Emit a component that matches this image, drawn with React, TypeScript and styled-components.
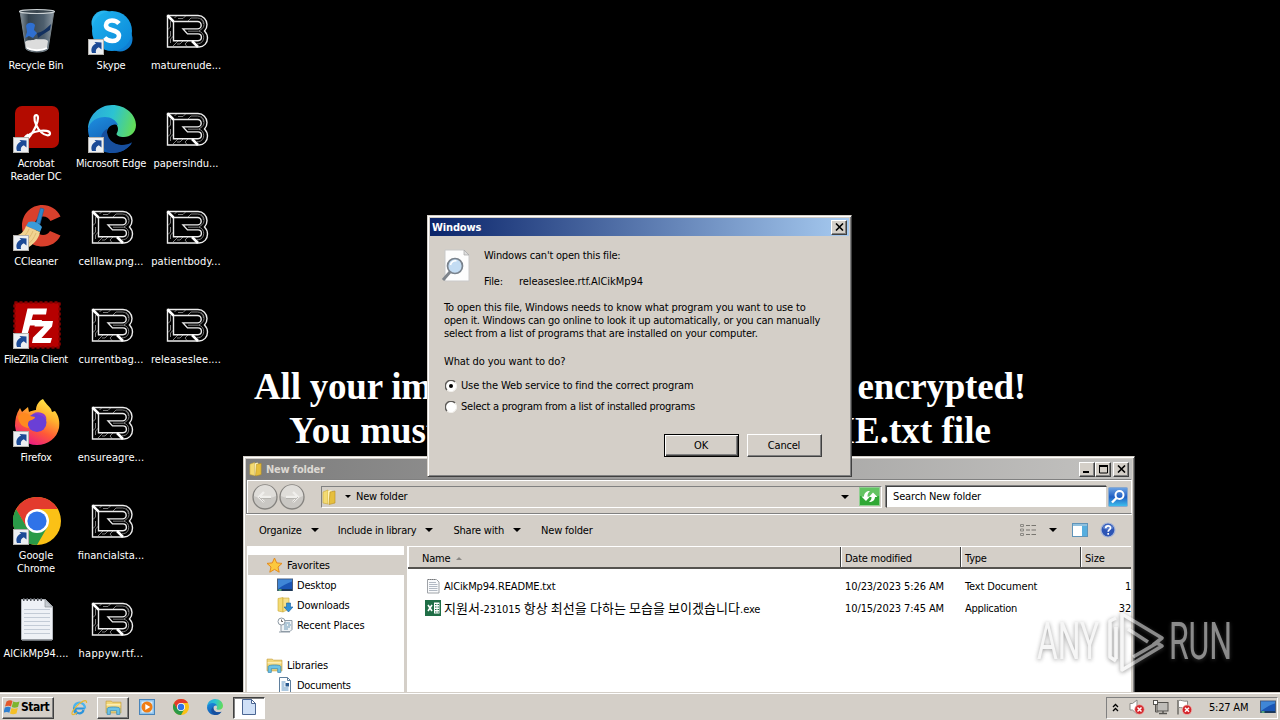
import React from 'react';
import styled, { createGlobalStyle, css } from 'styled-components';

const face = '#d4cfc8';
const uiFont = "'DejaVu Sans Condensed', 'DejaVu Sans', 'Noto Sans CJK KR', sans-serif";

const GlobalStyle = createGlobalStyle`
  *, *::before, *::after { box-sizing: border-box; }
  html, body { margin: 0; padding: 0; background: #000; overflow: hidden; }
  svg { display: block; flex: none; }
`;

const raised = css`
  border: 1px solid;
  border-color: #fff #404040 #404040 #fff;
  box-shadow: inset -1px -1px #808080;
  background: ${face};
`;
const sunken = css`
  border: 1px solid;
  border-color: #808080 #fff #fff #808080;
`;

const Screen = styled.div`
  position: relative;
  display: flex;
  flex-direction: column;
  width: 1280px;
  height: 720px;
  background: #000;
  overflow: hidden;
  font: 11px/13px ${uiFont};
  letter-spacing: -0.2px;
  color: #000;
`;
const Desktop = styled.main`
  position: relative;
  flex: 1;
  min-height: 0;
  overflow: hidden;
`;
const Text = styled.span<{ $track?: number; $bold?: boolean }>`
  white-space: nowrap;
  ${p => p.$track !== undefined && `letter-spacing: ${p.$track}px;`}
  ${p => p.$bold && 'font-weight: bold;'}
`;
const Hangul = styled.span`
  font-family: 'Noto Sans CJK KR', sans-serif;
  font-size: 13px;
  letter-spacing: 0.05px;
`;

/* wallpaper */
const Wallpaper = styled.div`
  position: absolute;
  left: 0;
  right: 0;
  top: 365px;
  display: flex;
  flex-direction: column;
  align-items: center;
  font: bold 37px/44px 'Liberation Serif', serif;
  color: #fff;
  letter-spacing: 0;
`;

/* desktop shortcuts */
const ShortcutColumns = styled.div`
  position: absolute;
  inset: 0 auto auto 0;
  display: flex;
`;
const ShortcutColumn = styled.div`
  display: flex;
  flex-direction: column;
  width: 75px;
  padding-top: 7px;
`;
const Cell = styled.div`
  height: 98px;
  width: 75px;
`;
const IconBox = styled.div`
  position: relative;
  width: 48px;
  height: 48px;
  margin-left: 13px;
  display: flex;
  align-items: center;
  justify-content: center;
`;
const Badge = styled.div`
  position: absolute;
  left: 0;
  bottom: 0;
`;
const CellLabel = styled.div<{ $track?: number }>`
  margin: 4px 3px 0 0;
  text-align: center;
  color: #fff;
  white-space: pre;
  letter-spacing: ${p => p.$track ?? -0.2}px;
`;

/* windows */
const ExplorerWindow = styled.section`
  position: absolute;
  left: 243px;
  top: 456px;
  width: 892px;
  height: 236px;
  padding: 2px 2px 0 2px;
  display: flex;
  flex-direction: column;
  background: ${face};
  border: 1px solid;
  border-color: ${face} #404040 transparent ${face};
  border-bottom: 0;
  box-shadow: inset 1px 1px #fff, inset -1px 0 #808080;
`;
const DialogWindow = styled.section`
  position: absolute;
  left: 427px;
  top: 215px;
  width: 425px;
  height: 262px;
  padding: 2px;
  display: flex;
  flex-direction: column;
  background: ${face};
  border: 1px solid;
  border-color: ${face} #404040 #404040 ${face};
  box-shadow: inset 1px 1px #fff, inset -1px -1px #808080;
`;
const TitleBar = styled.header<{ $active?: boolean }>`
  display: flex;
  align-items: center;
  height: ${p => (p.$active ? 18 : 20)}px;
  padding: 0 ${p => (p.$active ? 2 : 3)}px 0 ${p => (p.$active ? 2 : 3)}px;
  background: ${p =>
    p.$active ? 'linear-gradient(90deg, #0a246a, #a6caf0)' : 'linear-gradient(90deg, #7d7d7d, #c3c2c0)'};
  color: ${p => (p.$active ? '#fff' : '#dcd8d2')};
  gap: 3px;
`;
const Spacer = styled.div`
  flex: 1;
`;
const CaptionButton = styled.button<{ $gap?: boolean }>`
  ${raised}
  width: 16px;
  height: 15px;
  padding: 0;
  margin-left: ${p => (p.$gap ? 2 : 0)}px;
  display: flex;
  align-items: center;
  justify-content: center;
`;
const CaptionButtons = styled.div`
  display: flex;
`;

/* dialog */
const DialogBody = styled.div`
  flex: 1;
  display: flex;
  flex-direction: column;
  padding: 13px 27px 17px 14px;
`;
const DialogTop = styled.div`
  display: flex;
  gap: 13px;
  height: 39px;
  margin-left: -3px;
`;
const DialogFile = styled.div`
  display: flex;
  flex-direction: column;
  gap: 13px;
`;
const FileLine = styled.div`
  display: flex;
`;
const FileKey = styled.span`
  width: 35px;
`;
const Paragraph = styled.div`
  display: flex;
  flex-direction: column;
  margin-top: 13px;
`;
const Question = styled.div`
  margin: 15px 0 11px;
  letter-spacing: -0.12px;
`;
const RadioRow = styled.label`
  display: flex;
  align-items: center;
  gap: 4px;
  height: 13px;
  margin: 0 0 8px 1px;
`;
const DialogActions = styled.div`
  display: flex;
  justify-content: flex-end;
  gap: 8px;
  margin-top: 13px;
`;
const PushButton = styled.button<{ $primary?: boolean }>`
  ${raised}
  width: 75px;
  height: 23px;
  padding: 0 1px 1px 0;
  font: inherit;
  letter-spacing: inherit;
  color: #000;
  ${p => p.$primary && 'border-color: #000; box-shadow: inset 1px 1px #fff, inset -1px -1px #404040, inset -2px -2px #808080;'}
`;

/* explorer */
const AddressRow = styled.div`
  display: flex;
  align-items: center;
  height: 35px;
  padding: 0 1px 0 5px;
  border: 1px solid;
  border-color: #808080 #fff #808080 #808080;
  box-shadow: inset 1px 1px #fff, 0 1px #fff;
`;
const NavButtons = styled.div`
  display: flex;
  gap: 1px;
`;
const AddressBox = styled.div`
  ${sunken}
  display: flex;
  align-items: center;
  width: 561px;
  height: 22px;
  margin-left: 16px;
  padding: 0 32px 0 0;
`;
const Crumb = styled.div`
  display: flex;
  align-items: center;
  gap: 5px;
  margin-left: 8px;
`;
const RefreshSlot = styled.div`
  margin: 0 -31px 0 10px;
`;
const SearchBox = styled.div`
  display: flex;
  align-items: center;
  width: 221px;
  height: 22px;
  margin: 0 1px 0 4px;
  padding-left: 6px;
  background: #fff;
  border: 1px solid;
  border-color: #404040 ${face} ${face} #404040;
  box-shadow: -1px -1px #808080;
`;
const CommandBar = styled.div`
  display: flex;
  align-items: center;
  height: 32px;
  padding: 0 16px 0 13px;
`;
const Command = styled.div<{ $gap: number; $inner?: number }>`
  display: flex;
  align-items: center;
  gap: ${p => p.$inner ?? 8}px;
  margin-right: ${p => p.$gap}px;
`;
const Content = styled.div`
  display: flex;
  flex: 1;
  min-height: 0;
  margin: 0 1px;
  overflow: hidden;
`;
const NavPane = styled.nav`
  width: 157px;
  height: 146px;
  padding-top: 9px;
  background: #fff;
  overflow: hidden;
`;
const NavRow = styled.div<{ $child?: boolean; $selected?: boolean }>`
  display: flex;
  align-items: center;
  gap: 4px;
  height: 20px;
  margin-left: 1px;
  padding-left: ${p => (p.$child ? 29 : 18)}px;
  background: ${p => (p.$selected ? face : 'transparent')};
`;
const Splitter = styled.div`
  width: 3px;
  background: ${face};
`;
const FilePane = styled.div`
  flex: 1;
  background: #fff;
  border-left: 1px solid #fff;
  overflow: hidden;
`;
const FileGrid = styled.div<{ $header?: boolean }>`
  display: grid;
  grid-template-columns: ${p => (p.$header ? 433 : 432)}px 120px 120px 51px;
  height: ${p => (p.$header ? 23 : 22)}px;
  ${p => p.$header && `background: ${face}; border-bottom: 2px solid #55534f; border-top: 1px solid #fff; margin-bottom: 6px;`}
`;
const HeaderCell = styled.div`
  display: flex;
  align-items: center;
  gap: 6px;
  padding: 2px 0 0 3px;
  border-right: 1px solid #404040;
  border-left: 1px solid #fff;
  &:first-child { padding-left: 13px; }
  &:last-child { border-right: 0; }
`;
const FileCell = styled.div<{ $right?: boolean }>`
  display: flex;
  align-items: center;
  gap: 3px;
  padding-left: 5px;
  justify-content: ${p => (p.$right ? 'flex-end' : 'flex-start')};
  &:first-child { padding-left: 17px; }
`;

/* taskbar */
const Taskbar = styled.footer`
  display: flex;
  align-items: center;
  height: 28px;
  padding: 2px 2px 0;
  background: ${face};
  border-top: 1px solid ${face};
  box-shadow: inset 0 1px #fff;
`;
const StartButton = styled.button`
  ${raised}
  display: flex;
  align-items: center;
  gap: 1px;
  width: 52px;
  height: 22px;
  padding: 0 0 1px 1px;
  margin-right: 9px;
  font: bold 12px/14px ${uiFont};
  letter-spacing: -0.5px;
`;
const TaskSlot = styled.div<{ $state?: 'raised' | 'pressed' }>`
  display: flex;
  align-items: center;
  justify-content: center;
  width: 32px;
  height: 22px;
  padding-bottom: 1px;
  margin-right: 2px;
  ${p => p.$state === 'raised' && raised}
  ${p => p.$state === 'pressed' && 'background: #fff; border: 1px solid; border-color: #404040 #fff #fff #404040; box-shadow: inset 1px 1px #808080;'}
`;
const Tray = styled.div`
  ${sunken}
  display: flex;
  align-items: center;
  width: 172px;
  height: 22px;
  padding: 0 1px 1px 5px;
`;
const TrayIcon = styled.div<{ $gap: number }>`
  margin-right: ${p => p.$gap}px;
`;
const Watermark = styled.div`
  position: absolute;
  left: 1030px;
  top: 605px;
`;

const Svg = ({ w, h = w, box, children }: { w: number; h?: number; box?: string; children: React.ReactNode }) => (
  <svg width={w} height={h} viewBox={box ?? `0 0 ${w} ${h}`} fill="none">
    {children}
  </svg>
);

const LockIcon = () => (
  <Svg w={43} h={34}>
    <g stroke="#8a8a8a" strokeWidth=".9">
      <path d="M11 1.500L8.500 4M20 1.500L17 4.500h-5M22 7l3-3h6.500a6 6 0 0 1 6 6M4.500 7v6L2 15.500M4.500 17v5L2 24.500M7.500 22L4.500 25v4M12 27l-5 5M17 27l-3 3h-3M22 27l-3 3 2 2.500" />
      <path d="M22 17.200h10.500a6 6 0 0 1 5.200 6.500 6 6 0 0 1-5.200 6H31M35 4.500c2 1.500 3 3 3 6 0 2.500-1.500 4-3 5l-2 1.500" />
    </g>
    <path d="M1.500 1.500H32a9 9 0 0 1 9 9c0 3-1 5-2.500 6.500C40 18.500 41.500 21 41.500 24c0 5-3.500 9-8.500 9H1.500z" stroke="#ececec" strokeWidth="1.400" />
    <path d="M7.500 7.500H31.500a3.700 3.700 0 0 1 0 7.400H17l4.500 5H32a3.300 3.300 0 0 1 0 6.800H7.500z" stroke="#ececec" strokeWidth="1.400" />
    <path d="M1.500 1.500l6 6M26 27l6 6" stroke="#fff" strokeWidth="2.600" />
  </Svg>
);

const ShortcutArrow = () => (
  <Svg w={16}>
    <rect x=".5" y=".5" width="15" height="15" fill="#eceff2" stroke="#b4b2ae" />
    <path d="M13.500 10.500V3.500L6.500 3l1.500 1.700C4 6 2.500 10 4 14h4C7.300 11.500 8.300 9.500 10.800 8.300z" fill="#1b4a96" />
  </Svg>
);

const RecycleIcon = () => (
  <Svg w={48}>
    <defs>
      <linearGradient id="bin" x1="0" x2="1">
        <stop offset="0" stopColor="#8a97a0" /><stop offset=".25" stopColor="#33424e" />
        <stop offset=".7" stopColor="#4e5f6e" /><stop offset="1" stopColor="#8f9ba4" />
      </linearGradient>
    </defs>
    <path d="M7 4h34l-6 38c-3 4-18 4-22 0z" fill="url(#bin)" stroke="#78838a" />
    <path d="M13 19c1-4 7-4 9-1l-1 5 3 3-4 5-4-2-4 2 2-6z" fill="#2f6fd0" />
    <path d="M24 26c5-1 9-4 13-8l1-1-1 6-8 5-4 3z" fill="#12305f" />
    <path d="M12 35c3-3 8-1 11-3 4 1 9-1 12 2l-1 7c-4 3-16 3-21 0z" fill="#dcdcdc" />
    <path d="M14 41c5 3 15 3 20 0" stroke="#fff" strokeWidth="2" />
    <ellipse cx="24" cy="4.500" rx="17.500" ry="2" fill="#3a464f" stroke="#cdd3d6" strokeWidth="1.200" />
  </Svg>
);

const SkypeIcon = () => (
  <Svg w={48}>
    <defs>
      <linearGradient id="sky" x1="0" y1="0" x2="1" y2="1">
        <stop offset="0" stopColor="#1fb5ee" /><stop offset="1" stopColor="#0a84d8" />
      </linearGradient>
    </defs>
    <circle cx="16" cy="16" r="12.500" fill="#28b5ef" />
    <circle cx="32" cy="32" r="12.500" fill="#0f7fd2" />
    <circle cx="24" cy="24" r="20" fill="url(#sky)" />
    <path d="M31 16.500c-2-2.300-4.500-3-7-3-3.500 0-6 1.800-6 4.800 0 6.300 13 3.700 13 10.400 0 3.200-3 5.300-6.800 5.300-3.200 0-5.700-1-7.700-3.200" stroke="#fff" strokeWidth="4.600" />
  </Svg>
);

const AcrobatIcon = () => (
  <Svg w={48}>
    <rect x="2" y="1" width="44" height="42" rx="7" fill="#b30b00" />
    <path d="M12 34c3-5 8-7 14-8 6-1 11 0 11 2.500 0 3-5 2-8.500-1C24 24 21 16 21.500 12c.5-3 3.500-2.500 3.500 1 0 5-4 13-8 18-2 2.500-4.500 4.500-5.500 3.500-.7-1 .5-3 4-5" stroke="#fff" strokeWidth="2.200" />
  </Svg>
);

const EdgeIcon = ({ size = 48 }: { size?: number }) => (
  <Svg w={size} box="0 0 48 48">
    <defs>
      <linearGradient id="edgeTop" x1="0" y1=".3" x2="1" y2=".5">
        <stop offset="0" stopColor="#2aa6dc" /><stop offset=".5" stopColor="#2cc3d2" /><stop offset="1" stopColor="#63dc58" />
      </linearGradient>
      <linearGradient id="edgeLow" x1="0" y1="0" x2=".6" y2="1">
        <stop offset="0" stopColor="#1d8fe0" /><stop offset="1" stopColor="#1152a8" />
      </linearGradient>
    </defs>
    <path d="M0 24C0 11 11 0 24 0c14 0 24 10 24 20 0 8-6 12-12 12-5 0-7.500-1.500-7.500-3 0-1 1.500-2 1.500-5 0-5-5-9-12-9C10 15 3 18 0 24z" fill="url(#edgeTop)" />
    <path d="M0 24c2-8 9-12 17-12 6 0 11 3 13 8-6-2-11 2-11 8 0 8 7 12 14 12 4 0 8 0 11-2-4 6-11 10-20 10C11 48 0 38 0 24z" fill="url(#edgeLow)" />
    <path d="M19 24c-1 9 6 16 15 16 4 0 8-1 10-3-4 7-11 11-20 11-7-2-11-8-11-14 0-4 2-8 6-10z" fill="#174f9e" />
  </Svg>
);

const CCleanerIcon = () => (
  <Svg w={48}>
    <path d="M47.500 13.500C44 6 37 2 29.500 2 18 2 9 11 9 23c0 12 9 20.500 20.500 20.500 8 0 14.500-4 18-11L37 28c-1.500 2.500-4 4-7 4-5 0-8.500-4-8.500-9s3.500-9.500 8.500-9.500c3.500 0 6 2 7.500 4.500z" fill="#d8402c" />
    <path d="M27.500 5l3.500 1-4 15-4-1z" fill="#2f86c8" stroke="#1b5f9e" strokeWidth=".6" />
    <path d="M15.500 19c4-1.500 10 0 13.500 5l-2 5-14-6z" fill="#3a9bd9" />
    <path d="M13 23l14 6c-1 6-5 11-11 15-5-1-10-6-14-11 5-1 9-4 11-10z" fill="#f1d391" />
    <path d="M16 26c-2 5-5 8-9 9M20 28c-2 5-5 9-9 11M23 30c-2 5-4 8-8 11" stroke="#dfb970" />
  </Svg>
);

const FileZillaIcon = () => (
  <Svg w={48}>
    <rect x="1.500" y="1.500" width="45" height="45" fill="#b60000" stroke="#8a0000" strokeWidth="2.500" strokeDasharray="3 2" />
    <path d="M14.500 7.500H34l-1 6H20l-1.500 5.500H29l-1.500 5.500H17L13.500 37H7.500z" fill="#fff" />
    <path d="M22.500 20H40l-1 5.500L28.500 37H39l-1.500 5H19l1-5.500L31 25.500h-9.500z" fill="#fff" />
  </Svg>
);

const FirefoxIcon = () => (
  <Svg w={48}>
    <defs>
      <linearGradient id="ff" x1=".8" y1="0" x2=".3" y2="1">
        <stop offset="0" stopColor="#fff04a" /><stop offset=".35" stopColor="#ffb02e" />
        <stop offset=".65" stopColor="#ff5a36" /><stop offset="1" stopColor="#e8168a" />
      </linearGradient>
    </defs>
    <path d="M30 0c2 4 6 7 8 10l1 3 3-1c4 5 5 11 4 17-2 10-11 17-22 17C12 46 3 38 2 27c0-6 1-12 5-18l2 4 6-5 1 5c2-1 5-2 7-2 0-5 3-9 7-11z" fill="url(#ff)" />
    <circle cx="24" cy="23.500" r="9.500" fill="#6a3fd6" />
    <path d="M20 14.500c4-2 9-1.500 12 1.500 1 1.500 1.500 3 1.300 5-3-4-7-6-13.300-6.500z" fill="#8c3bd0" />
    <path d="M5 17c4-4 9-4 12 0l5 1c0 2.500-4 3-6 4-1.500 2-1.500 5 0 7-6 0-11-5-11-12z" fill="#ff8a1f" />
  </Svg>
);

const ChromeIcon = ({ size = 48 }: { size?: number }) => (
  <Svg w={size} box="0 0 48 48">
    <circle cx="24" cy="24" r="24" fill="#fbc116" />
    <path d="M3.200 12A24 24 0 0 1 44.800 12H24L13.600 30z" fill="#e33b2e" />
    <path d="M3.200 12A24 24 0 0 0 24 48L34.400 30H13.600z" fill="#2a9a48" />
    <path d="M3.200 12L13.600 30 20 18z" fill="#e33b2e" />
    <circle cx="24" cy="24" r="12" fill="#fff" />
    <circle cx="24" cy="24" r="9.600" fill="#2f73e8" />
  </Svg>
);

const NotepadIcon = ({ w = 32, h = 44 }: { w?: number; h?: number }) => (
  <Svg w={w} h={h} box="0 0 32 44">
    <path d="M.5 2.500h24l7 7v33H.5z" fill="#eef1f6" stroke="#b4b8be" />
    <path d="M24 2.500V10h7.500z" fill="#c5cad0" stroke="#8a8f96" strokeWidth=".7" />
    <path d="M3 12.500h26M3 16.500h26M3 20.500h26M3 24.500h26M3 28.500h26M3 32.500h26M3 36.500h26" stroke="#c3cbd6" />
    <path d="M2 2.500h21" stroke="#55595f" strokeWidth="3" strokeDasharray="1.500 2" />
    <path d="M1 43h30" stroke="#8d9299" strokeWidth="1.500" />
  </Svg>
);
const SmallNotepadIcon = () => (
  <Svg w={16}>
    <path d="M2.500 1.500h9l2.500 2.500v11H2.500z" fill="#fafbfc" stroke="#9fa3a8" />
    <path d="M4 4.500h7M4 6.500h8.500M4 8.500h8.500M4 10.500h8.500M4 12.500h8.500" stroke="#b3bac4" />
    <path d="M3 1.500h8" stroke="#777" strokeDasharray="1 1" />
  </Svg>
);

const FolderIcon = ({ w = 15, h = 16 }: { w?: number; h?: number }) => (
  <Svg w={w} h={h} box="0 0 15 16">
    <path d="M1 3l5-2v14l-5-1z" fill="#f3da73" stroke="#c9a736" strokeWidth=".6" />
    <path d="M6 2l3-1 1 1v12l-4 1z" fill="#fff3b8" />
    <path d="M8 3l5-1v12l-6 1.500z" fill="#e6bf3d" stroke="#b88f22" strokeWidth=".6" />
  </Svg>
);

const MagnifierFile = () => (
  <Svg w={30} h={34}>
    <path d="M4 1h19l5 5v26H4z" fill="#fdfdfd" stroke="#c9c9c9" />
    <path d="M23 1v5h5z" fill="#dedede" stroke="#a5a5a5" strokeWidth=".7" />
    <path d="M9 23l-7 8" stroke="#7f858c" strokeWidth="3" />
    <circle cx="14" cy="17" r="7.500" fill="#c3dcf3" stroke="#79828c" strokeWidth="1.700" />
    <path d="M9.500 16a5 5 0 0 1 6-4" stroke="#fff" strokeWidth="1.500" />
  </Svg>
);

const Close = () => <Svg w={9} h={8}><path d="M1 .5l7 7M8 .5l-7 7" stroke="#000" strokeWidth="1.600" /></Svg>;
const Down = ({ w = 7 }: { w?: number }) => (
  <Svg w={w} h={w / 2} box="0 0 8 4"><path d="M0 0h8L4 4z" fill="#000" /></Svg>
);

const Radio = ({ on }: { on?: boolean }) => (
  <Svg w={12}>
    <circle cx="6" cy="6" r="5.300" fill="#fff" />
    <path d="M2 10A5.500 5.500 0 0 1 10 2" stroke="#5c5a57" strokeWidth="1.400" />
    <path d="M10 2A5.500 5.500 0 0 1 2 10" stroke="#f4f2ee" strokeWidth="1" />
    {on && <circle cx="6" cy="6" r="2" fill="#000" />}
  </Svg>
);

const NavArrow = ({ back }: { back?: boolean }) => (
  <Svg w={26}>
    <circle cx="13" cy="13" r="12" fill="#c9c7c3" stroke="#85837f" strokeWidth="1.300" />
    <path d="M2 12a11 11 0 0 1 22 0c-6 3-16 3-22 0z" fill="#dfddd9" />
    <path d={back ? 'M19 13H8M12 8l-5 5 5 5' : 'M7 13h11M14 8l5 5-5 5'} stroke="#f0efec" strokeWidth="2.400" />
    <path d={back ? 'M19 14.500H9M12 18l-5-5' : 'M7 14.500h10M14 18l5-5'} stroke="#a9a7a3" strokeWidth=".7" />
  </Svg>
);

const RefreshIcon = () => (
  <Svg w={21} h={19}>
    <rect x=".5" y=".5" width="20" height="18" fill="#2fa834" stroke="#8fcf90" />
    <rect x="1" y="1" width="19" height="8" fill="#63c362" />
    <path d="M2.500 9.500L7 14l4-4.500H8.500C8.500 7 9 5.500 11 4 7.500 4 5 6 5 9.500z" fill="#fff" />
    <path d="M18.500 10L14 5.500 10 10h2.500c0 2-.5 3.500-2.500 5 3.500 0 6-2 6-5z" fill="#fff" />
  </Svg>
);

const SearchIcon = () => (
  <Svg w={20}>
    <defs><linearGradient id="srch" x2="0" y2="1"><stop stopColor="#6fa5e4" /><stop offset=".5" stopColor="#1f5fc4" /><stop offset="1" stopColor="#3fc2ee" /></linearGradient></defs>
    <rect x=".5" y=".5" width="19" height="19" rx="1" fill="url(#srch)" stroke="#89a9cf" />
    <circle cx="11.500" cy="8" r="4" stroke="#fff" strokeWidth="2" />
    <path d="M8.500 11L4 15.500" stroke="#fff" strokeWidth="2.400" />
  </Svg>
);

const ViewIcon = () => (
  <Svg w={16} h={14}>
    <path d="M.5 1.500h3v2h-3zM.5 6h3v2h-3zM.5 10.500h3v2h-3z" stroke="#8b8984" />
    <path d="M6 2.500h4M11.500 2.500H16M6 7h4M11.500 7H16M6 11.500h4M11.500 11.500H16" stroke="#77756f" strokeWidth="1.200" />
  </Svg>
);
const PaneIcon = () => (
  <Svg w={16} h={14}>
    <rect x=".5" y=".5" width="15" height="13" fill="#fff" stroke="#5f93b8" />
    <path d="M1 2h14" stroke="#8fc0de" strokeWidth="2" />
    <rect x="10" y="3" width="5" height="10" fill="#57aede" />
  </Svg>
);
const HelpIcon = () => (
  <Svg w={16}>
    <circle cx="8" cy="8" r="7" fill="#2d55b5" stroke="#a9b7d8" strokeWidth="1.200" />
    <path d="M2.500 6a6 6 0 0 1 11 0c-3 2-8 2-11 0z" fill="#5d80cc" />
    <path d="M5.700 6.200c0-3 4.800-3 4.800-.3 0 1.700-2.300 1.800-2.300 3.800M8.200 11v1.800" stroke="#fff" strokeWidth="1.700" />
  </Svg>
);

const StarIcon = () => (
  <Svg w={17} h={16}><path d="M8.500 1l2.200 4.900 5.300.5-4 3.600 1.200 5.200-4.700-2.800-4.700 2.800L5 10 1 6.400l5.300-.5z" fill="#fcc93e" stroke="#e58a1d" /></Svg>
);
const MonitorIcon = () => (
  <Svg w={16} h={14}>
    <rect x=".5" y="1" width="15" height="11.500" fill="#1a55b4" stroke="#4a5d78" />
    <path d="M1 1.500h14v2C10 5 5 8 1 11z" fill="#3f86d6" />
    <path d="M1 12h14" stroke="#13314f" strokeWidth="1.600" />
    <path d="M1.500 12h3" stroke="#6fd08a" strokeWidth="1.400" />
  </Svg>
);
const DownloadsIcon = () => (
  <Svg w={16}>
    <path d="M1 1.500l5-1V15l-5-1z" fill="#f3da73" stroke="#c9a736" strokeWidth=".6" />
    <path d="M6 1h6v11l-6 3z" fill="#f6e08a" stroke="#c9a736" strokeWidth=".6" />
    <path d="M9.500 6h4v4H16l-4.500 5L7 10h2.500z" fill="#2f8fd6" stroke="#1a5f9d" strokeWidth=".6" />
  </Svg>
);
const RecentIcon = () => (
  <Svg w={16}>
    <path d="M4 3.500h11v9l-2 2H4z" fill="#eef2f5" stroke="#8e9aa5" />
    <path d="M7 6h6M7 8h3M11 8h3M7 10h6M7 12h4" stroke="#6f9bb8" />
    <circle cx="4.500" cy="4.500" r="3.500" fill="#fff" stroke="#8e9aa5" />
    <path d="M4.500 2.500v2H6" stroke="#444" strokeWidth=".8" />
    <path d="M2 15h11" stroke="#8e9aa5" />
  </Svg>
);
const LibrariesIcon = ({ size = 16 }: { size?: number }) => (
  <Svg w={size} box="0 0 16 16">
    <path d="M1 3V2h5l1 1h8v10H1z" fill="#f2d778" stroke="#c8a13b" strokeWidth=".7" />
    <path d="M1.500 5.500h13" stroke="#fff6cf" />
    <path d="M2 9c0-2 12-2 12 0v5.500h-3V11H5v3.500H2z" fill="#6cc3e6" stroke="#3988b5" strokeWidth=".7" />
  </Svg>
);
const DocumentIcon = () => (
  <Svg w={16}>
    <path d="M2.500.5h8l3 3v12h-11z" fill="#fff" stroke="#5f7f9d" />
    <path d="M10.500.5v3h3" stroke="#5f7f9d" />
    <path d="M4.500 5h4M4.500 7h3M4.500 9h3M4.500 11h7M4.500 13h7" stroke="#5a92c2" />
    <rect x="8.500" y="6" width="3.500" height="3.500" fill="#27598f" />
  </Svg>
);
const ExcelIcon = () => (
  <Svg w={16}>
    <rect width="16" height="16" fill="#1f6e46" />
    <path d="M9 2.500h5.500v11H9z" fill="#fff" />
    <path d="M10 4.500h1.500M12.500 4.500H14M10 7h1.500M12.500 7H14M10 9.500h1.500M12.500 9.500H14M10 12h1.500M12.500 12H14" stroke="#1f6e46" />
    <path d="M3 5l4 6M7 5l-4 6" stroke="#fff" strokeWidth="1.600" />
  </Svg>
);

const WindowsFlag = () => (
  <Svg w={16}>
    <path d="M2.500 2.500c2.500-1.500 4.500-1.500 6-.5L7 7.500c-1.500-1-3.500-1-6 0z" fill="#e2582c" />
    <path d="M9.200 2.500c2 1 4 1 6.300 0L14 8c-2.500 1-4.500 1-6.300 0z" fill="#7db52f" />
    <path d="M.8 8.500c2.500-1.200 4.500-1 6-.1L5.300 13.800c-1.500-1-3.500-1-5.800 0z" fill="#2f7fd0" />
    <path d="M7.500 9c2 1 4 1 6.300 0L12.500 14.500c-2.500 1-4.500 1-6.500 0z" fill="#f4bf26" />
  </Svg>
);
const IeIcon = () => (
  <Svg w={18}>
    <path d="M15 10.500H5.500a4 4 0 0 0 8 1.500" stroke="#2b94dc" strokeWidth="2.200" />
    <path d="M4 9.800a5.500 5.500 0 0 1 11 .7" stroke="#4cb4ee" strokeWidth="2.400" />
    <path d="M4 9.500v2a5.500 5.500 0 0 0 3 4.500" stroke="#2b94dc" strokeWidth="2" />
    <path d="M16.500 5c.5-3-2-3.500-7 .5C4 10 .5 15.500 2.500 16.500c1 .3 3-.8 4.500-2" stroke="#e9b832" strokeWidth="1.200" />
  </Svg>
);
const MediaIcon = () => (
  <Svg w={16}>
    <rect x=".5" y=".5" width="15" height="15" fill="#8fc3ec" stroke="#4884ba" />
    <rect x="2.500" y="2.500" width="11" height="11" fill="#d9ebf8" />
    <circle cx="8" cy="8" r="5.500" fill="#ef7d14" />
    <path d="M6.300 5l5 3-5 3z" fill="#fff" />
  </Svg>
);
const PageIcon = () => (
  <Svg w={14} h={16}>
    <path d="M.5.5h9l4 4v11H.5z" fill="#cfe0f7" stroke="#4b6693" />
    <path d="M9.500.5v4h4z" fill="#fff" stroke="#4b6693" />
  </Svg>
);
const ErrorMark = ({ x, y }: { x: number; y: number }) => (
  <g>
    <circle cx={x} cy={y} r="4.800" fill="#d3262b" stroke="#f0b9b5" strokeWidth=".7" />
    <path d={`M${x - 2} ${y - 2}l4 4M${x + 2} ${y - 2}l-4 4`} stroke="#fff" strokeWidth="1.500" />
  </g>
);
const Chevrons = () => (
  <Svg w={7} h={9}><path d="M1 4l2.500-2.500L6 4M1 8l2.500-2.500L6 8" stroke="#000" strokeWidth="1.300" /></Svg>
);
const SpeakerIcon = () => (
  <Svg w={17} h={16}>
    <path d="M2 4.500h2.500L9 1v14l-4.500-4H2z" fill="#fff" stroke="#8b8985" />
    <ErrorMark x={11.500} y={10.500} />
  </Svg>
);
const NetworkIcon = () => (
  <Svg w={17} h={16}>
    <rect x="5" y="3.500" width="11" height="8.500" fill="#bfbdb9" stroke="#55534f" />
    <path d="M7 14.500h8M11 12v2" stroke="#55534f" strokeWidth="1.400" />
    <rect x="1.500" y="1.500" width="4" height="4" fill="#fff" stroke="#55534f" />
    <path d="M3.500 6v7h3" stroke="#55534f" />
  </Svg>
);
const FlagIcon = () => (
  <Svg w={17} h={16}>
    <path d="M2 15.500V1" stroke="#66645f" strokeWidth="1.400" />
    <path d="M2.500 1.500c3-1 5 1.500 9 .5v7c-4 1-6-1-9-.5z" fill="#fff" stroke="#8b8985" />
    <ErrorMark x={11} y={10.800} />
  </Svg>
);

type Item = { label: string; icon: React.ReactNode; link?: boolean; track?: number };
const columns: Item[][] = [
  [
    { label: 'Recycle Bin', icon: <RecycleIcon /> },
    { label: 'Acrobat\nReader DC', icon: <AcrobatIcon />, link: true },
    { label: 'CCleaner', icon: <CCleanerIcon />, link: true },
    { label: 'FileZilla Client', icon: <FileZillaIcon />, link: true, track: -0.35 },
    { label: 'Firefox', icon: <FirefoxIcon />, link: true },
    { label: 'Google\nChrome', icon: <ChromeIcon />, link: true, track: -0.1 },
    { label: 'AlCikMp94....', icon: <NotepadIcon />, track: 0 },
  ],
  [
    { label: 'Skype', icon: <SkypeIcon />, link: true },
    { label: 'Microsoft Edge', icon: <EdgeIcon />, link: true },
    { label: 'celllaw.png...', icon: <LockIcon />, track: 0.05 },
    { label: 'currentbag...', icon: <LockIcon />, track: 0.1 },
    { label: 'ensureagre...', icon: <LockIcon />, track: 0.1 },
    { label: 'financialsta...', icon: <LockIcon />, track: 0 },
    { label: 'happyw.rtf...', icon: <LockIcon />, track: 0.3 },
  ],
  [
    { label: 'maturenude...', icon: <LockIcon />, track: 0 },
    { label: 'papersindu...', icon: <LockIcon />, track: 0 },
    { label: 'patientbody...', icon: <LockIcon />, track: 0.15 },
    { label: 'releaseslee....', icon: <LockIcon />, track: 0.1 },
  ],
];

const FileName = ({ name }: { name: string }) => (
  <Text $track={-0.1}>
    {name.split(/([\uac00-\ud7a3]+)/).map((part, i) => (i % 2 ? <Hangul key={i}>{part}</Hangul> : part))}
  </Text>
);

const Explorer = () => (
  <ExplorerWindow>
    <TitleBar>
      <FolderIcon w={14} h={16} />
      <Text $bold $track={-0.2}>New folder</Text>
      <Spacer />
      <CaptionButtons>
        <CaptionButton><Svg w={8}><path d="M0 7h6" stroke="#000" strokeWidth="2" /></Svg></CaptionButton>
        <CaptionButton><Svg w={9}><path d="M.5 1v7h8V1z" stroke="#000" /><path d="M0 1h9" stroke="#000" strokeWidth="2" /></Svg></CaptionButton>
        <CaptionButton $gap><Close /></CaptionButton>
      </CaptionButtons>
    </TitleBar>
    <AddressRow>
      <NavButtons>
        <NavArrow back />
        <NavArrow />
      </NavButtons>
      <AddressBox>
        <FolderIcon />
        <Crumb>
          <Down w={6} />
          <Text>New folder</Text>
        </Crumb>
        <Spacer />
        <Down w={8} />
        <RefreshSlot><RefreshIcon /></RefreshSlot>
      </AddressBox>
      <SearchBox><Text $track={-0.15}>Search New folder</Text></SearchBox>
      <SearchIcon />
    </AddressRow>
    <CommandBar>
      <Command $gap={19} $inner={9}><Text $track={-0.2}>Organize</Text><Down w={8} /></Command>
      <Command $gap={20} $inner={9}><Text $track={-0.25}>Include in library</Text><Down w={8} /></Command>
      <Command $gap={20} $inner={9}><Text $track={-0.2}>Share with</Text><Down w={8} /></Command>
      <Text>New folder</Text>
      <Spacer />
      <Command $gap={15} $inner={13}><ViewIcon /><Down w={8} /></Command>
      <Command $gap={12}><PaneIcon /></Command>
      <HelpIcon />
    </CommandBar>
    <Content>
      <NavPane>
        <NavRow $selected><StarIcon /><Text>Favorites</Text></NavRow>
        <NavRow $child><MonitorIcon /><Text>Desktop</Text></NavRow>
        <NavRow $child><DownloadsIcon /><Text>Downloads</Text></NavRow>
        <NavRow $child><RecentIcon /><Text $track={-0.1}>Recent Places</Text></NavRow>
        <NavRow />
        <NavRow><LibrariesIcon size={17} /><Text>Libraries</Text></NavRow>
        <NavRow $child><DocumentIcon /><Text $track={-0.3}>Documents</Text></NavRow>
      </NavPane>
      <Splitter />
      <FilePane>
        <FileGrid $header>
          <HeaderCell><Text>Name</Text><Svg w={6} h={3}><path d="M0 3h6L3 0z" fill="#8b8985" /></Svg></HeaderCell>
          <HeaderCell><Text $track={-0.25}>Date modified</Text></HeaderCell>
          <HeaderCell><Text>Type</Text></HeaderCell>
          <HeaderCell><Text>Size</Text></HeaderCell>
        </FileGrid>
        <FileGrid>
          <FileCell><SmallNotepadIcon /><Text $track={-0.15}>AlCikMp94.README.txt</Text></FileCell>
          <FileCell><Text $track={-0.1}>10/23/2023 5:26 AM</Text></FileCell>
          <FileCell><Text $track={-0.15}>Text Document</Text></FileCell>
          <FileCell $right><Text>1</Text></FileCell>
        </FileGrid>
        <FileGrid>
          <FileCell><ExcelIcon /><FileName name="지원서-231015 항상 최선을 다하는 모습을 보이겠습니다.exe" /></FileCell>
          <FileCell><Text $track={-0.1}>10/15/2023 7:45 AM</Text></FileCell>
          <FileCell><Text $track={-0.3}>Application</Text></FileCell>
          <FileCell $right><Text>32</Text></FileCell>
        </FileGrid>
      </FilePane>
    </Content>
  </ExplorerWindow>
);

const Dialog = () => (
  <DialogWindow>
    <TitleBar $active>
      <Text $bold $track={-0.15}>Windows</Text>
      <Spacer />
      <CaptionButton><Close /></CaptionButton>
    </TitleBar>
    <DialogBody>
      <DialogTop>
        <MagnifierFile />
        <DialogFile>
          <Text>Windows can't open this file:</Text>
          <FileLine><FileKey>File:</FileKey><Text $track={-0.06}>releaseslee.rtf.AlCikMp94</Text></FileLine>
        </DialogFile>
      </DialogTop>
      <Paragraph>
        <Text $track={-0.14}>To open this file, Windows needs to know what program you want to use to</Text>
        <Text $track={-0.24}>open it. Windows can go online to look it up automatically, or you can manually</Text>
        <Text>select from a list of programs that are installed on your computer.</Text>
      </Paragraph>
      <Question>What do you want to do?</Question>
      <RadioRow><Radio on /><Text $track={-0.13}>Use the Web service to find the correct program</Text></RadioRow>
      <RadioRow><Radio /><Text $track={-0.25}>Select a program from a list of installed programs</Text></RadioRow>
      <DialogActions>
        <PushButton $primary>OK</PushButton>
        <PushButton>Cancel</PushButton>
      </DialogActions>
    </DialogBody>
  </DialogWindow>
);

const AnyRun = () => (
  <Watermark>
    <svg width="250" height="80" viewBox="0 0 250 80" opacity=".58" style={{ filter: 'drop-shadow(0 1px 2px #555)' }}>
      <g fill="#f0f0f0" fontFamily="Roboto, sans-serif" fontSize="51" fontWeight="400">
        <text x="7" y="54" textLength="62" lengthAdjust="spacingAndGlyphs">ANY</text>
        <text x="139" y="54" textLength="63" lengthAdjust="spacingAndGlyphs">RUN</text>
      </g>
      <g fill="none" stroke="#f0f0f0" strokeWidth="3.600" strokeLinejoin="round">
        <path d="M86 13l-6 3v36l6 4M86 22v32M92 60V9l40 24-9 7M98 24l20 13M92 60v5l40-24-5-3-24 14" />
      </g>
    </svg>
  </Watermark>
);

export default function App() {
  return (
    <>
      <GlobalStyle />
      <Screen>
        <Desktop>
          <Wallpaper>
            <Text $track={-0.22}>All your important files are stolen and encrypted!</Text>
            <Text $track={0.02}>You must find AlCikMp94.README.txt file</Text>
          </Wallpaper>
          <ShortcutColumns>
            {columns.map((items, i) => (
              <ShortcutColumn key={i}>
                {items.map(item => (
                  <Cell key={item.label}>
                    <IconBox>
                      {item.icon}
                      {item.link && <Badge><ShortcutArrow /></Badge>}
                    </IconBox>
                    <CellLabel $track={item.track}>{item.label}</CellLabel>
                  </Cell>
                ))}
              </ShortcutColumn>
            ))}
          </ShortcutColumns>
          <Explorer />
          <Dialog />
          <AnyRun />
        </Desktop>
        <Taskbar>
          <StartButton><WindowsFlag />Start</StartButton>
          <TaskSlot><IeIcon /></TaskSlot>
          <TaskSlot $state="raised"><LibrariesIcon size={17} /></TaskSlot>
          <TaskSlot><MediaIcon /></TaskSlot>
          <TaskSlot><ChromeIcon size={16} /></TaskSlot>
          <TaskSlot><EdgeIcon size={16} /></TaskSlot>
          <TaskSlot $state="pressed"><PageIcon /></TaskSlot>
          <Spacer />
          <Tray>
            <TrayIcon $gap={9}><Chevrons /></TrayIcon>
            <TrayIcon $gap={7}><SpeakerIcon /></TrayIcon>
            <TrayIcon $gap={7}><NetworkIcon /></TrayIcon>
            <TrayIcon $gap={16}><FlagIcon /></TrayIcon>
            <Text>5:27 AM</Text>
            <Spacer />
            <MonitorIcon />
          </Tray>
        </Taskbar>
      </Screen>
    </>
  );
}
